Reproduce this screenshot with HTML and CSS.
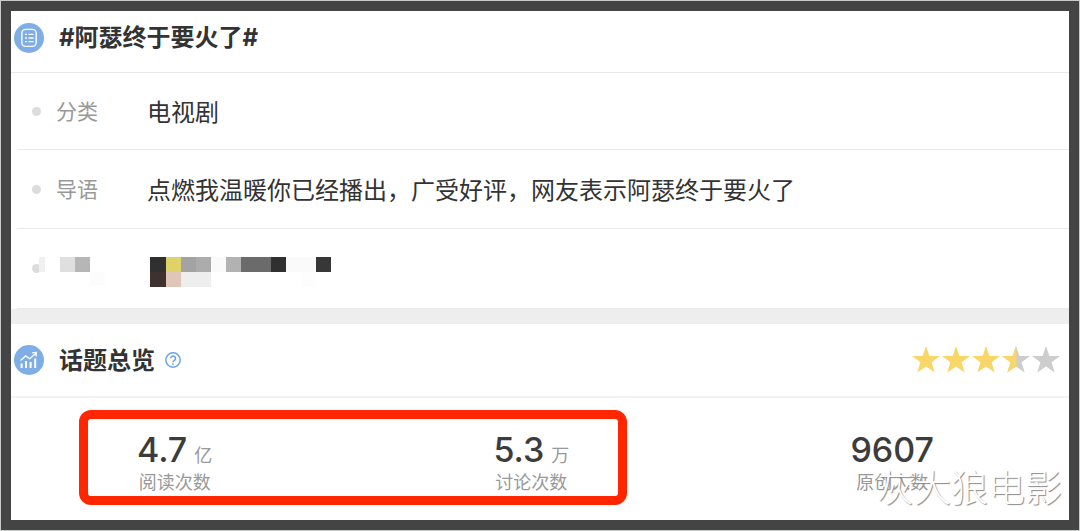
FILE: index.html
```html
<!DOCTYPE html>
<html lang="zh-CN">
<head>
    <meta charset="UTF-8">
    <meta name="viewport" content="width=device-width, initial-scale=1.0">
    <title>话题详情</title>
    <link rel="stylesheet" href="styles.css">
</head>
<body>
    <main class="frame">
        <section class="topic">
            <header class="section-head">
                <svg class="head-icon" viewBox="0 0 30 30" aria-hidden="true">
                    <circle cx="15" cy="15" r="15" fill="#7eaee5"/>
                    <rect x="7.8" y="6.4" width="14.4" height="17" rx="4" fill="none" stroke="#fff" stroke-width="1.4"/>
                    <path d="M11 11.4h2M14.5 11.4h5M11 15h2M14.5 15h5M11 18.6h2M14.5 18.6h5" stroke="#fff" stroke-width="1.3"/>
                </svg>
                <h1>#阿瑟终于要火了#</h1>
            </header>
            <dl class="info">
                <div class="info-row">
                    <dt>分类</dt>
                    <dd>电视剧</dd>
                </div>
                <div class="info-row">
                    <dt>导语</dt>
                    <dd>点燃我温暖你已经播出，广受好评，网友表示阿瑟终于要火了</dd>
                </div>
                <div class="info-row">
                    <dt>
                        <svg class="mosaic mosaic-label" viewBox="0 0 75 30" shape-rendering="crispEdges" aria-hidden="true">
                            <rect x="3" y="0" width="6" height="15" fill="#f0f0f0"/>
                            <rect x="24" y="0" width="15" height="15" fill="#dfdfdf"/>
                            <rect x="39" y="0" width="15" height="15" fill="#b6b6b6"/>
                            <rect x="54" y="15" width="15" height="13" fill="#fcfcfc"/>
                        </svg>
                    </dt>
                    <dd>
                        <svg class="mosaic mosaic-value" viewBox="0 0 182 30" shape-rendering="crispEdges" aria-hidden="true">
                            <rect x="0" y="0" width="16" height="15" fill="#303030"/>
                            <rect x="16" y="0" width="15" height="15" fill="#dfd368"/>
                            <rect x="31" y="0" width="15" height="15" fill="#a3a3a3"/>
                            <rect x="46" y="0" width="15" height="15" fill="#acacac"/>
                            <rect x="61" y="0" width="15" height="15" fill="#fafafa"/>
                            <rect x="76" y="0" width="15" height="15" fill="#b2b2b2"/>
                            <rect x="91" y="0" width="30" height="15" fill="#6b6b6b"/>
                            <rect x="121" y="0" width="15" height="15" fill="#303030"/>
                            <rect x="136" y="0" width="30" height="15" fill="#fafafa"/>
                            <rect x="166" y="0" width="15" height="15" fill="#373737"/>
                            <rect x="0" y="15" width="16" height="15" fill="#3e3230"/>
                            <rect x="16" y="15" width="15" height="15" fill="#dfc6b8"/>
                            <rect x="31" y="15" width="30" height="15" fill="#eeeeee"/>
                            <rect x="151" y="15" width="15" height="15" fill="#fdfdfd"/>
                        </svg>
                    </dd>
                </div>
            </dl>
        </section>

        <section class="overview">
            <header class="section-head overview-head">
                <svg class="head-icon" viewBox="0 0 30 30" aria-hidden="true">
                    <circle cx="15" cy="15" r="15" fill="#7eaee5"/>
                    <path d="M7.6 23v-4.5M12 23v-7M16.6 23v-6M21.2 23v-9.5" stroke="#fff" stroke-width="2"/>
                    <path d="M6.5 15.5l5.2-4.6 4 2.8 6-5.2M18.2 7.8l4-.4v4" fill="none" stroke="#fff" stroke-width="1.3"/>
                </svg>
                <h2>话题总览</h2>
                <svg class="help-icon" viewBox="0 0 16 16" aria-hidden="true">
                    <circle cx="8" cy="8" r="7.2" fill="#fff" stroke="#6aa3e4" stroke-width="1.5"/>
                    <path d="M5.7 6.3a2.4 2.4 0 1 1 3.8 2C8.4 9 8 9.2 8 10.2" fill="none" stroke="#6aa3e4" stroke-width="1.5"/>
                    <circle cx="8" cy="12.1" r=".9" fill="#6aa3e4"/>
                </svg>
                <svg class="stars" viewBox="0 0 150 30" role="img" aria-label="3.5">
                    <defs>
                        <path id="star" d="M15 1l3.4 9.9h10.6l-8.4 6.4 3.1 10.2L15 21.4l-8.7 6.1 3.1-10.2L1 10.9h10.6z"/>
                        <clipPath id="half"><rect x="0" y="0" width="15.5" height="30"/></clipPath>
                    </defs>
                    <g fill="#f8d667">
                        <use href="#star"/>
                        <use href="#star" x="30"/>
                        <use href="#star" x="60"/>
                    </g>
                    <g transform="translate(90 0)">
                        <use href="#star" fill="#cdcdcd"/>
                        <use href="#star" fill="#f8d667" clip-path="url(#half)"/>
                    </g>
                    <use href="#star" x="120" fill="#cdcdcd"/>
                </svg>
            </header>
            <div class="stats">
                <div class="stat">
                    <p class="stat-number">4.7<span class="unit">亿</span></p>
                    <p class="stat-label">阅读次数</p>
                </div>
                <div class="stat">
                    <p class="stat-number">5.3<span class="unit">万</span></p>
                    <p class="stat-label">讨论次数</p>
                </div>
                <div class="stat">
                    <p class="stat-number">9607</p>
                    <p class="stat-label">原创人数</p>
                </div>
                <div class="highlight"></div>
                <div class="watermark">灰大狼电影</div>
            </div>
        </section>
    </main>
</body>
</html>
```

FILE: styles.css
```css
* {
    margin: 0;
    padding: 0;
    box-sizing: border-box;
}

body {
    background: #c8cbc9;
    color: #333;
    font-family: "Noto Sans CJK SC", sans-serif;
    min-height: 100vh;
    padding: 1px;
    display: flex;
}

.frame {
    flex: 1;
    background: #fff;
    border: 10px solid #444;
}

/* Section heads */
.section-head {
    display: flex;
    align-items: center;
    height: 62px;
    padding: 0 8px 8px 3px;
    border-bottom: 1px solid #e9e9e9;
}

.head-icon {
    width: 30px;
    height: 30px;
    margin-right: 15px;
}

h1,
h2 {
    padding-top: 1px;
    font-family: Inter, "Noto Sans CJK SC", sans-serif;
    font-size: 24px;
    line-height: 34px;
    font-weight: 700;
}

/* Info rows */
.info-row {
    display: flex;
    align-items: center;
    height: 79px;
    margin-left: 6px;
    padding-left: 15px;
    border-bottom: 1px solid #ebebeb;
}

.info-row:first-child {
    height: 77px;
}

.info-row:last-child {
    height: 80px;
}

.info-row::before {
    content: "";
    width: 9px;
    height: 9px;
    border-radius: 50%;
    background: #dcdcdc;
}

dt {
    width: 106px;
    padding-left: 15px;
    padding-bottom: 2px;
    color: #999;
    font-size: 21px;
    line-height: 32px;
}

dd {
    font-size: 24px;
    line-height: 36px;
}

.mosaic {
    display: block;
    height: 30px;
}

.mosaic-label {
    width: 75px;
    margin: 8px 0 0 -20px;
}

.mosaic-value {
    width: 182px;
    margin: 7px 0 0 3px;
}

/* Overview */
.overview {
    border-top: 15px solid #eee;
}

.overview-head {
    height: 74px;
    padding-bottom: 0;
    border-bottom: 2px solid #f3f3f3;
}

.help-icon {
    width: 16px;
    height: 16px;
    margin-left: 10px;
}

.stars {
    width: 150px;
    height: 30px;
    margin-left: auto;
}

.stats {
    position: relative;
    display: flex;
    justify-content: space-between;
    padding: 32px 135px 24px 126px;
}

.stat {
    text-align: center;
}

.stat-number {
    color: #3c3c3c;
    font-family: Inter, "Noto Sans CJK SC", sans-serif;
    font-size: 34px;
    line-height: 39px;
    font-weight: 500;
}

.unit {
    margin-left: 7px;
    color: #999;
    font-size: 18px;
    line-height: 18px;
    font-weight: 400;
}

.stat-label {
    color: #999;
    font-size: 18px;
    line-height: 24px;
}

.highlight {
    position: absolute;
    top: 12px;
    left: 68px;
    right: 442px;
    height: 95px;
    border: 9px solid #ff2600;
    border-radius: 12px;
}

.watermark {
    position: absolute;
    right: 7px;
    bottom: 7px;
    color: #fff;
    font-size: 37px;
    line-height: 48px;
    font-weight: 300;
    text-shadow: 1px 1px 1px #888;
}
```
